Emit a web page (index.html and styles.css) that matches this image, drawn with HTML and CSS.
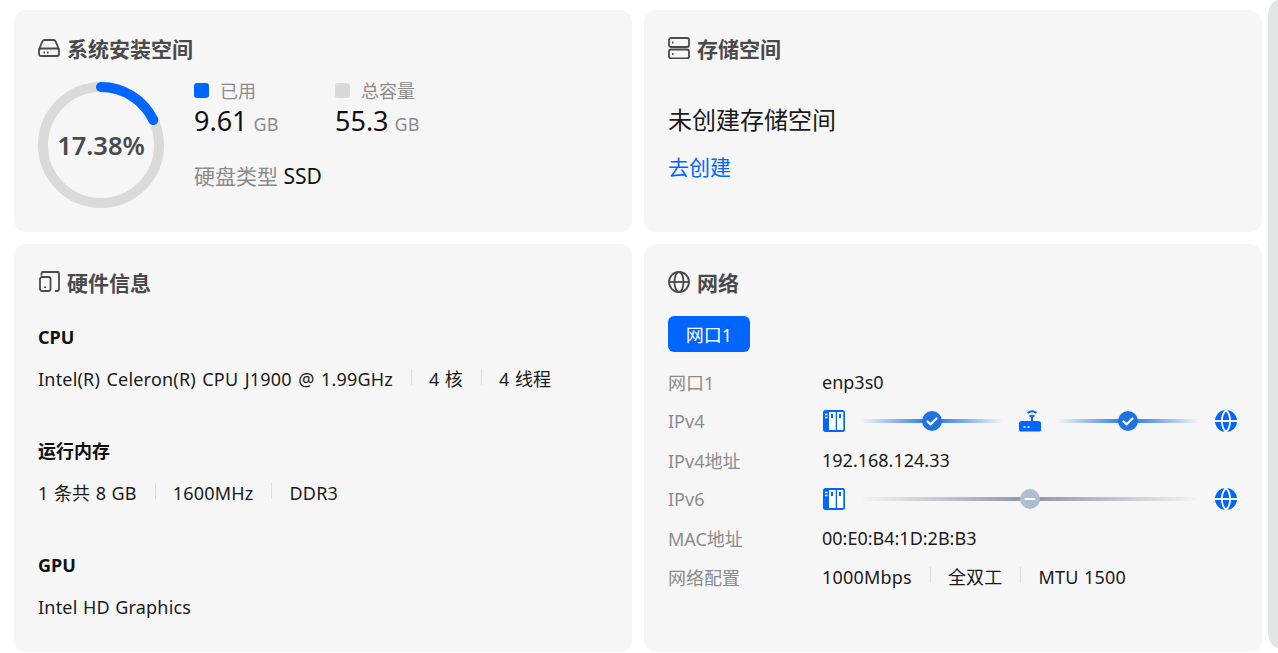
FILE: index.html
```html
<!DOCTYPE html>
<html lang="zh-CN">
<head>
  <meta charset="UTF-8" />
  <meta name="viewport" content="width=device-width, initial-scale=1.0" />
  <title>概览</title>
  <link rel="stylesheet" href="styles.css">
</head>
<body>
  <div class="overview">
    <section class="card">
      <h2 class="card-title">
        <svg class="title-icon" viewBox="0 0 22 20"><path d="M1 11.500 4.300 3.600C4.700 2.600 5.500 2 6.600 2h8.800c1.100 0 1.900.6 2.300 1.600L21 11.500" /><rect x="1" y="10.500" width="20" height="7.500" rx="2" /><path class="dots" d="M5.500 14.500h1.500M9 14.500h1.500" /></svg>
        系统安装空间
      </h2>
      <div class="disk">
        <div class="ring">
          <svg viewBox="0 0 126 126"><circle class="ring-track" cx="63" cy="63" r="58" /><path class="ring-value" d="M63 5A58 58 0 0 1 115.300 38" /></svg>
          <span class="ring-label">17.38%</span>
        </div>
        <div class="disk-info">
          <div class="disk-stats">
            <div class="stat">
              <div class="stat-name"><i class="dot dot-used"></i>已用</div>
              <div class="stat-value">9.61<small>GB</small></div>
            </div>
            <div class="stat">
              <div class="stat-name"><i class="dot dot-total"></i>总容量</div>
              <div class="stat-value">55.3<small>GB</small></div>
            </div>
          </div>
          <div class="disk-type"><span>硬盘类型</span> SSD</div>
        </div>
      </div>
    </section>

    <section class="card">
      <h2 class="card-title">
        <svg class="title-icon" viewBox="0 0 22 22"><rect x="1" y="1" width="20" height="9" rx="2" /><rect x="1" y="12.500" width="20" height="9" rx="2" /><path class="dots" d="M4 5.500h1.500M4 17h1.500" /></svg>
        存储空间
      </h2>
      <p class="empty-text">未创建存储空间</p>
      <a class="create-link" href="#">去创建</a>
    </section>

    <section class="card">
      <h2 class="card-title">
        <svg class="title-icon" viewBox="0 0 22 22"><path d="M3.500 4.500V2.500A1.500 1.500 0 0 1 5 1H19.500A1.500 1.500 0 0 1 21 2.500V18.500A1.500 1.500 0 0 1 19.500 20H17" /><rect x="2" y="6" width="10.500" height="14" rx="2" /><path class="dots" d="M7 15.500v1.500" /></svg>
        硬件信息
      </h2>
      <div class="hw-list">
        <div class="hw-group">
          <h3>CPU</h3>
          <div class="hw-line"><span class="cpu-name">Intel(R) Celeron(R) CPU J1900 @ 1.99GHz</span><span>4 核</span><span>4 线程</span></div>
        </div>
        <div class="hw-group">
          <h3>运行内存</h3>
          <div class="hw-line"><span>1 条共 8 GB</span><span>1600MHz</span><span>DDR3</span></div>
        </div>
        <div class="hw-group">
          <h3>GPU</h3>
          <div class="hw-line"><span>Intel HD Graphics</span></div>
        </div>
      </div>
    </section>

    <section class="card">
      <h2 class="card-title">
        <svg class="title-icon" viewBox="0 0 22 22"><circle cx="11" cy="11" r="10" /><ellipse cx="11" cy="11" rx="4.500" ry="10" /><path d="M1 11h20" /></svg>
        网络
      </h2>
      <button class="port-tab">网口1</button>
      <dl class="net-table">
        <dt>网口1</dt>
        <dd>enp3s0</dd>
        <dt>IPv4</dt>
        <dd class="net-path">
          <svg class="net-icon" viewBox="0 0 22 22"><rect width="22" height="22" rx="2.500" /><path class="cut" d="M6 2h6.700v18H6zM14 2h6.300v18H14z" /><path class="tick" d="M9 4v4M17 4v4" /><path class="mark" d="M2 4.500h2.500M2 7.500h2.500" /></svg>
          <div class="link link-ok"><i class="state state-ok"><svg viewBox="0 0 20 20"><path d="M5.500 10.500 8.700 13.300 14.500 7.500" /></svg></i></div>
          <svg class="net-icon" viewBox="0 0 22 22"><path class="wave" d="M8.500 3Q13-.5 17.500 3M10.500 6.500Q13 4.800 15.500 6.500M13 7v5" /><path d="M2.500 11h17A2.500 2.500 0 0 1 22 13.500V20a1.500 1.500 0 0 1-1.500 1.500H1.500A1.500 1.500 0 0 1 0 20V13.500A2.500 2.500 0 0 1 2.500 11z" /><path class="mark" d="M4.500 17h2M8.500 17h2" /></svg>
          <div class="link link-ok"><i class="state state-ok"><svg viewBox="0 0 20 20"><path d="M5.500 10.500 8.700 13.300 14.500 7.500" /></svg></i></div>
          <svg class="net-icon" viewBox="0 0 22 22"><circle cx="11" cy="11" r="11" /><path class="globe" d="M0 11h22M11 0C5.500 5 5.500 17 11 22M11 0c5.500 5 5.500 17 0 22" /></svg>
        </dd>
        <dt>IPv4地址</dt>
        <dd>192.168.124.33</dd>
        <dt>IPv6</dt>
        <dd class="net-path">
          <svg class="net-icon" viewBox="0 0 22 22"><rect width="22" height="22" rx="2.500" /><path class="cut" d="M6 2h6.700v18H6zM14 2h6.300v18H14z" /><path class="tick" d="M9 4v4M17 4v4" /><path class="mark" d="M2 4.500h2.500M2 7.500h2.500" /></svg>
          <div class="link link-off"><i class="state state-off"><svg viewBox="0 0 20 20"><path d="M5.500 10h9" /></svg></i></div>
          <svg class="net-icon" viewBox="0 0 22 22"><circle cx="11" cy="11" r="11" /><path class="globe" d="M0 11h22M11 0C5.500 5 5.500 17 11 22M11 0c5.500 5 5.500 17 0 22" /></svg>
        </dd>
        <dt>MAC地址</dt>
        <dd>00:E0:B4:1D:2B:B3</dd>
        <dt>网络配置</dt>
        <dd class="hw-line"><span>1000Mbps</span><span>全双工</span><span>MTU 1500</span></dd>
      </dl>
    </section>
  </div>
  <div class="scrollbar"></div>
</body>
</html>
```

FILE: styles.css
```css
* {
  box-sizing: border-box;
}
html, body {
  height: 100%;
}
body {
  margin: 0;
  background: #fff;
  color: #1a1a1a;
  font-family: "Noto Sans", "Noto Sans CJK SC", sans-serif;
  font-size: 18px;
  display: flex;
  overflow: hidden;
}
.overview {
  width: 1268px;
  padding: 10px 6px 0 14px;
  display: grid;
  grid-template-columns: 618px 618px;
  grid-template-rows: 222px 408px;
  gap: 12px;
}
.scrollbar {
  width: 10px;
  height: 648px;
  background: #e4e6e5;
  border-radius: 10px 0 0 10px / 16px 0 0 16px;
}
.card {
  background: #f6f6f6;
  border-radius: 12px;
  padding: 23px 24px 0;
}
.card-title {
  margin: 0;
  height: 30px;
  display: flex;
  align-items: center;
  gap: 7px;
  font-size: 21px;
  font-weight: 700;
  color: #4a4a4a;
}
.title-icon {
  width: 22px;
  height: 22px;
  fill: none;
  stroke: #4a4a4a;
  stroke-width: 1.800;
}
.title-icon .dots {
  stroke-width: 2;
}

.disk {
  display: flex;
  gap: 30px;
  margin-top: 17px;
}
.ring {
  position: relative;
  width: 126px;
  height: 126px;
  margin-top: 2px;
}
.ring svg {
  display: block;
  width: 100%;
  height: 100%;
  fill: none;
  stroke-width: 10;
}
.ring-track {
  stroke: #dadada;
}
.ring-value {
  stroke: #0066ff;
  stroke-linecap: round;
}
.ring-label {
  position: absolute;
  inset: 0;
  display: flex;
  align-items: center;
  justify-content: center;
  font-size: 25.500px;
  font-weight: 600;
  color: #4a4a4a;
}
.disk-stats {
  display: flex;
  gap: 57px;
}
.stat {
  width: 84px;
}
.stat-name {
  height: 20px;
  margin-bottom: 6px;
  display: flex;
  align-items: center;
  gap: 11px;
  color: #8c8c8c;
  white-space: nowrap;
}
.dot {
  width: 15px;
  height: 15px;
  border-radius: 3px;
}
.dot-used {
  background: #0066ff;
}
.dot-total {
  background: #d9d9d9;
}
.stat-value {
  font-size: 27px;
  line-height: 30px;
  color: #111;
  white-space: nowrap;
}
.stat-value small {
  font-size: 18px;
  color: #8c8c8c;
  margin-left: 6px;
}
.disk-type {
  margin-top: 23px;
  font-size: 21px;
  line-height: 28px;
  color: #111;
}
.disk-type span {
  color: #8c8c8c;
}

.empty-text {
  margin: 39px 0 0;
  font-size: 24px;
  line-height: 36px;
  color: #1a1a1a;
}
.create-link {
  display: block;
  margin-top: 15px;
  font-size: 21px;
  line-height: 28px;
  color: #0066ff;
  text-decoration: none;
}

.hw-list {
  margin-top: 27px;
  display: flex;
  flex-direction: column;
  gap: 14px;
}
.hw-group {
  height: 100px;
}
.hw-group h3 {
  margin: 0 0 16px;
  font-size: 18px;
  line-height: 26px;
  font-weight: 700;
  color: #111;
}
.hw-line {
  display: flex;
  align-items: center;
  line-height: 26px;
  letter-spacing: 0.2px;
  word-spacing: 0.5px;
  color: #1a1a1a;
}
.cpu-name {
  word-spacing: 1.500px;
}
.hw-line span + span {
  margin-left: 18px;
  padding-left: 18px;
  position: relative;
}
.hw-line span + span::before {
  content: "";
  position: absolute;
  left: 0;
  top: 3px;
  height: 16px;
  border-left: 1px solid #dcdcdc;
}

.port-tab {
  display: block;
  margin-top: 19px;
  width: 82px;
  height: 36px;
  border: none;
  border-radius: 6px;
  background: #0066ff;
  color: #fff;
  font: inherit;
}
.net-table {
  margin: 10px 0 0;
  display: grid;
  grid-template-columns: 154px 1fr;
  grid-auto-rows: 39px;
  align-items: center;
}
.net-table dt {
  color: #8c8c8c;
}
.net-table dd {
  margin: 0;
}
.net-table .net-path {
  display: flex;
  align-items: center;
  width: 414px;
  margin-left: 1px;
}
.net-icon {
  flex: none;
  width: 22px;
  height: 22px;
  fill: #0066ff;
}
.net-icon .cut {
  fill: #fff;
}
.net-icon .tick {
  fill: none;
  stroke: #0066ff;
  stroke-width: 2;
}
.net-icon .mark {
  fill: none;
  stroke: #fff;
  stroke-width: 1.600;
}
.net-icon .wave {
  fill: none;
  stroke: #0066ff;
  stroke-width: 2;
}
.net-icon .globe {
  fill: none;
  stroke: #fff;
  stroke-width: 1.800;
}
.link {
  flex: 1;
  height: 4px;
  margin: 0 17px;
  display: flex;
  align-items: center;
  justify-content: center;
  border-radius: 2px;
}
.link-ok {
  background: linear-gradient(90deg, rgba(32, 114, 224, 0.02), #2072e0 50%, rgba(32, 114, 224, 0.02));
}
.link-off {
  background: linear-gradient(90deg, rgba(140, 145, 165, 0.02), #8f93a8 50%, rgba(140, 145, 165, 0.02));
}
.state {
  width: 20px;
  height: 20px;
  border-radius: 50%;
  display: block;
  flex: none;
}
.state svg {
  display: block;
  fill: none;
  stroke: #fff;
  stroke-width: 2.200;
  stroke-linecap: round;
  stroke-linejoin: round;
}
.state-ok {
  background: #2072e0;
}
.state-off {
  background: #afbdd0;
}
```
